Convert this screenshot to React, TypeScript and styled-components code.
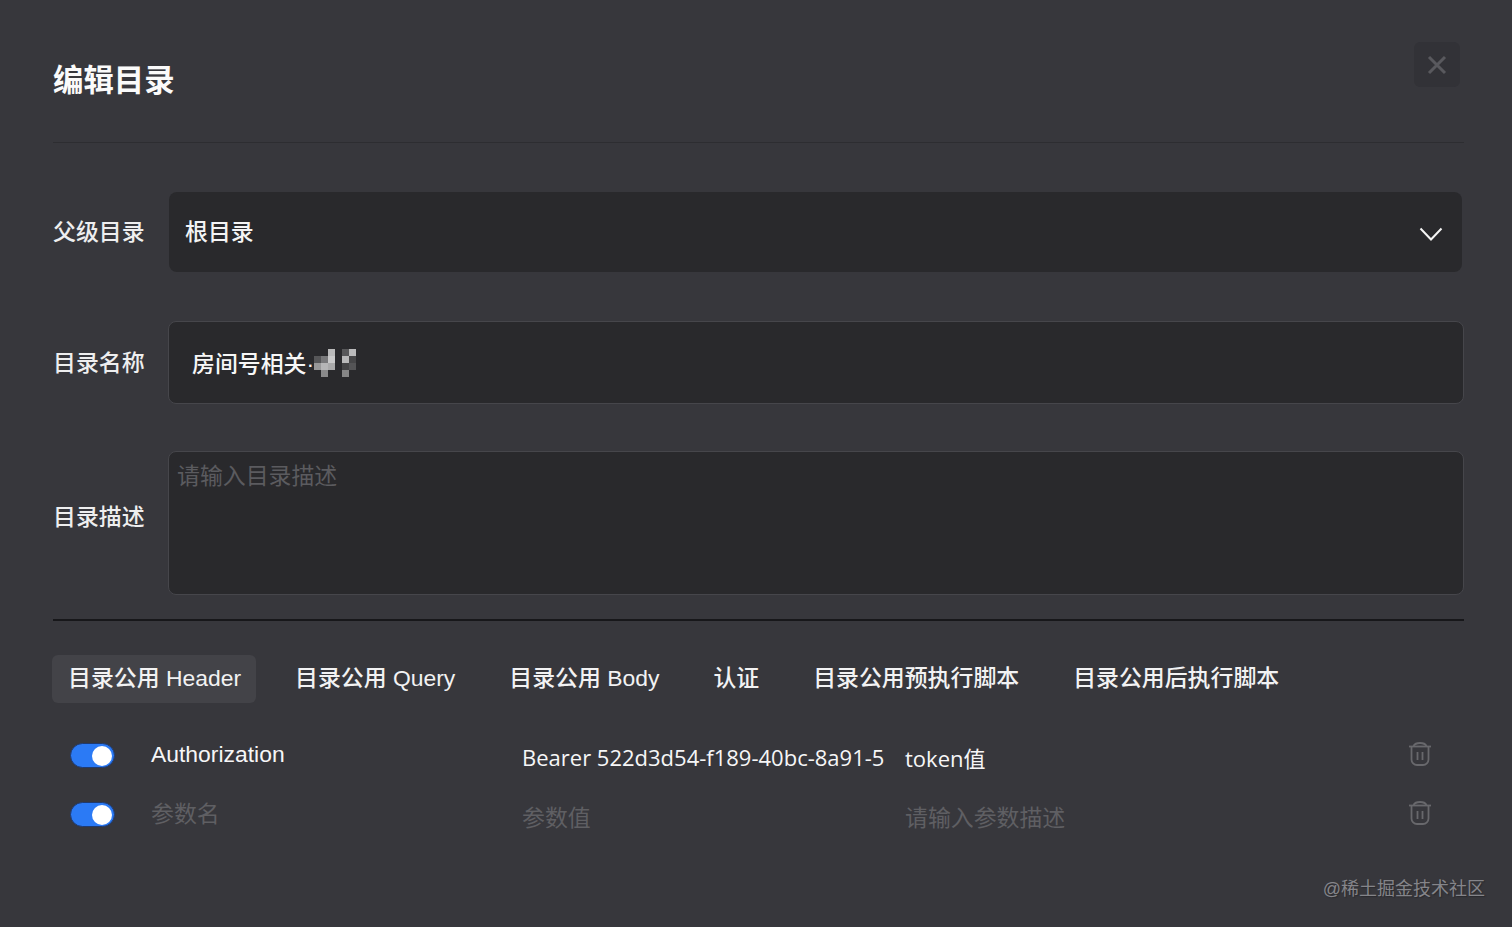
import React from "react";
import styled, { createGlobalStyle } from "styled-components";

const GlobalStyle = createGlobalStyle`
  html, body {
    margin: 0;
    padding: 0;
    height: 100%;
    background: #37373c;
    overflow: hidden;
  }
  * {
    box-sizing: border-box;
  }
`;

const Page = styled.div`
  position: relative;
  width: 1512px;
  height: 927px;
  padding: 0 48px 0 53px;
  background: #37373c;
  color: #f4f4f5;
  font-family: "Liberation Sans", "Noto Sans CJK SC", sans-serif;
  font-size: 22.9px;
  font-weight: 500;
  overflow: hidden;
`;

const Header = styled.header`
  display: flex;
  align-items: center;
  height: 143px;
  padding-top: 13px;
  border-bottom: 1px solid #2d2d31;
`;

const Title = styled.h1`
  margin: 0;
  font-size: 30.4px;
  font-weight: 700;
  color: #fafafa;
`;

const CloseButton = styled.button`
  position: absolute;
  top: 42px;
  left: 1414px;
  display: flex;
  align-items: center;
  justify-content: center;
  width: 46px;
  height: 45px;
  padding: 0;
  border: 0;
  border-radius: 6px;
  background: #323237;
`;

const Form = styled.div`
  display: flex;
  flex-direction: column;
`;

const FieldRow = styled.div<{ $top: number; $height: number }>`
  display: flex;
  align-items: center;
  height: ${(p) => p.$height}px;
  margin-top: ${(p) => p.$top}px;
`;

const Label = styled.label<{ $lift?: number }>`
  flex: 0 0 115px;
  padding-bottom: ${(p) => p.$lift ?? 4}px;
  color: #eeeeef;
`;

const Select = styled.div`
  display: flex;
  align-items: center;
  justify-content: space-between;
  flex: 0 0 1293px;
  height: 100%;
  margin-left: 1px;
  padding: 0 19px 0 16px;
  border-radius: 8px;
  background: #29292c;
`;

const SelectValue = styled.span`
  padding-bottom: 4px;
`;

const Chevron = styled.svg`
  margin-top: 3px;
`;

const TextBox = styled.div`
  display: flex;
  align-items: center;
  flex: 0 0 1296px;
  height: 100%;
  padding: 0 23px 2px;
  border: 1px solid #46464b;
  border-radius: 8px;
  background: #29292c;
  color: #f7f7f7;
`;

const MosaicSvg = styled.svg`
  margin-top: 3px;
`;

const TextArea = styled.div`
  flex: 0 0 1296px;
  height: 100%;
  padding: 5px 8px;
  border: 1px solid #46464b;
  border-radius: 8px;
  background: #29292c;
  color: #5b5b5f;
  font-weight: 400;
`;

const Divider = styled.div`
  height: 2px;
  margin-top: 24px;
  background: #17171a;
`;

const Tabs = styled.nav`
  display: flex;
  align-items: center;
  gap: 23px;
  margin-top: 34px;
  margin-left: -1px;
`;

const Tab = styled.div<{ $active?: boolean }>`
  display: flex;
  align-items: center;
  height: 48px;
  padding: 0 15px 6px 16px;
  border-radius: 6px;
  background: ${(p) => (p.$active ? "#434348" : "transparent")};
  color: #f2f2f3;
  white-space: nowrap;
`;

const ParamRows = styled.div`
  margin-top: 24px;
`;

const ParamRow = styled.div`
  display: grid;
  grid-template-columns: 98px 371px 383px 502px 1fr;
  align-items: center;
  height: 59px;
`;

const Switch = styled.div`
  display: flex;
  align-items: center;
  justify-content: flex-end;
  width: 45px;
  height: 25px;
  margin: 0 0 2px 17px;
  padding-right: 2px;
  border: 1px solid #1f3a70;
  border-radius: 13px;
  background: #2b7af5;
`;

const Knob = styled.span`
  width: 20px;
  height: 20px;
  border-radius: 50%;
  background: #ffffff;
`;

const Cell = styled.div<{ $muted?: boolean; $drop?: number; $humanist?: boolean }>`
  margin-top: ${(p) => Math.max(p.$drop ?? 0, 0)}px;
  margin-bottom: ${(p) => Math.max(-(p.$drop ?? 0), 0)}px;
  color: ${(p) => (p.$muted ? "#5f5f63" : "#f6f6f7")};
  font-weight: ${(p) => (p.$muted ? 400 : 500)};
  white-space: nowrap;
  ${(p) =>
    p.$humanist &&
    `font-family: "Open Sans", "Noto Sans CJK SC", sans-serif; font-size: 22px; font-weight: 400;`}
`;

const TrashCell = styled.div`
  display: flex;
  margin-bottom: 6px;
  padding-left: 1px;
`;

const Watermark = styled.div`
  position: absolute;
  right: 27px;
  top: 877px;
  font-size: 18px;
  font-weight: 400;
  line-height: 24px;
  color: #85858a;
  text-shadow: 1px 1px 1px #2a2a2e;
`;

const MOSAIC: [number, number, string][] = [
  [0, 1, "#565658"], [0, 2, "#979798"],
  [1, 1, "#78787a"], [1, 2, "#b5b5b6"], [1, 3, "#8a8a8b"],
  [2, 0, "#b9b9ba"], [2, 1, "#c9c9ca"], [2, 2, "#a9a9aa"],
  [4, 0, "#58585a"], [4, 1, "#b8b8b9"], [4, 2, "#444446"], [4, 3, "#858586"],
  [5, 0, "#bababb"], [5, 1, "#464648"], [5, 2, "#545456"],
];

const Mosaic = () => (
  <MosaicSvg width="42" height="28" viewBox="0 0 42 28">
    {MOSAIC.map(([col, row, fill]) => (
      <rect key={`${col}-${row}`} x={col * 7} y={row * 7} width="7" height="7" fill={fill} />
    ))}
  </MosaicSvg>
);

const CloseIcon = () => (
  <svg width="20" height="20" viewBox="0 0 20 20" fill="none" stroke="#59595e" strokeWidth="3">
    <path d="M2 2l16 16M18 2L2 18" />
  </svg>
);

const ChevronIcon = () => (
  <Chevron width="24" height="16" viewBox="0 0 24 16" fill="none" stroke="#f5f5f5" strokeWidth="2">
    <path d="M1.5 2.5L12 13.5 22.5 2.5" />
  </Chevron>
);

const TrashIcon = () => (
  <svg width="24" height="24" viewBox="0 0 24 24" fill="none" stroke="#68686c" strokeWidth="1.8">
    <path d="M1 4.5h22" />
    <path d="M5.5 4C6.5 2 8.5 1 12 1s5.5 1 6.5 3" />
    <path d="M3.5 5v12.5a5.5 5.5 0 0 0 5.5 5.5h6a5.5 5.5 0 0 0 5.5-5.5V5" />
    <path d="M9.5 10v8M14.5 10v8" />
  </svg>
);

const TABS = [
  "目录公用 Header",
  "目录公用 Query",
  "目录公用 Body",
  "认证",
  "目录公用预执行脚本",
  "目录公用后执行脚本",
];

export default function App() {
  return (
    <Page>
      <GlobalStyle />
      <Header>
        <Title>编辑目录</Title>
      </Header>
      <CloseButton aria-label="close">
        <CloseIcon />
      </CloseButton>

      <Form>
        <FieldRow $top={49} $height={80}>
          <Label>父级目录</Label>
          <Select>
            <SelectValue>根目录</SelectValue>
            <ChevronIcon />
          </Select>
        </FieldRow>
        <FieldRow $top={49} $height={83}>
          <Label>目录名称</Label>
          <TextBox>
            房间号相关·
            <Mosaic />
          </TextBox>
        </FieldRow>
        <FieldRow $top={47} $height={144}>
          <Label $lift={16}>目录描述</Label>
          <TextArea>请输入目录描述</TextArea>
        </FieldRow>
      </Form>

      <Divider />

      <Tabs>
        {TABS.map((tab, i) => (
          <Tab key={tab} $active={i === 0}>
            {tab}
          </Tab>
        ))}
      </Tabs>

      <ParamRows>
        <ParamRow>
          <Switch>
            <Knob />
          </Switch>
          <Cell $drop={-4}>Authorization</Cell>
          <Cell $humanist>Bearer 522d3d54-f189-40bc-8a91-5</Cell>
          <Cell $humanist>token值</Cell>
          <TrashCell>
            <TrashIcon />
          </TrashCell>
        </ParamRow>
        <ParamRow>
          <Switch>
            <Knob />
          </Switch>
          <Cell $muted $drop={-8}>
            参数名
          </Cell>
          <Cell $muted>参数值</Cell>
          <Cell $muted>请输入参数描述</Cell>
          <TrashCell>
            <TrashIcon />
          </TrashCell>
        </ParamRow>
      </ParamRows>

      <Watermark>@稀土掘金技术社区</Watermark>
    </Page>
  );
}
